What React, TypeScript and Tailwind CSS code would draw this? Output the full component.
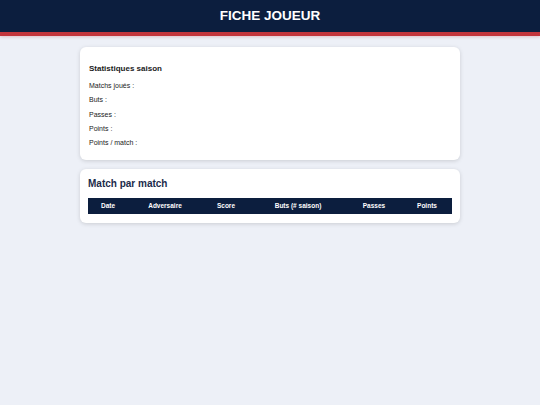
const STATS = ['Matchs joués :', 'Buts :', 'Passes :', 'Points :', 'Points / match :']

const COLUMNS = [
  { label: 'Date', width: 'w-[40px]' },
  { label: 'Adversaire', width: 'w-[74px]' },
  { label: 'Score', width: 'w-[48px]' },
  { label: 'Buts (# saison)', width: 'w-[96px]' },
  { label: 'Passes', width: 'w-[56px]' },
  { label: 'Points', width: 'w-[50px]' },
]

export default function App() {
  return (
    <div className="min-h-[405px] bg-[#edf0f7] font-['Liberation_Sans',Arial,sans-serif] text-[#1a1a1a]">
      {/* Header */}
      <header className="h-[36px] bg-[#0c1e3e] border-b-4 border-[#c3343b] shadow-[0_1px_3px_rgba(195,52,59,0.25)] flex items-center justify-center">
        <h1 className="text-white font-bold text-[13.5px] leading-none">FICHE JOUEUR</h1>
      </header>

      <main className="w-[380px] mx-auto pt-[11px] flex flex-col gap-[9px]">
        {/* Season stats */}
        <section className="bg-white rounded-[6px] shadow-[0_1px_4px_rgba(0,0,0,0.15)] px-[9px] pt-[18px] pb-[13px]">
          <h3 className="text-[8px] font-bold leading-none mb-[9px]">Statistiques saison</h3>
          <div className="flex flex-col gap-[6.3px]">
            {STATS.map((s) => (
              <p key={s} className="text-[7px] leading-[8px]">{s}</p>
            ))}
          </div>
        </section>

        {/* Match by match */}
        <section className="bg-white rounded-[6px] shadow-[0_1px_4px_rgba(0,0,0,0.15)] px-[8px] pt-[10px] pb-[9px]">
          <h2 className="text-[10px] font-bold text-[#1b2b4b] leading-none mb-[9px]">Match par match</h2>
          <table className="w-full border-collapse table-fixed">
            <thead>
              <tr className="bg-[#0c1e3e]">
                {COLUMNS.map((c) => (
                  <th key={c.label} className={`${c.width} h-[16px] text-white text-[6.5px] font-bold text-center p-0`}>
                    {c.label}
                  </th>
                ))}
              </tr>
            </thead>
            <tbody />
          </table>
        </section>
      </main>
    </div>
  )
}
